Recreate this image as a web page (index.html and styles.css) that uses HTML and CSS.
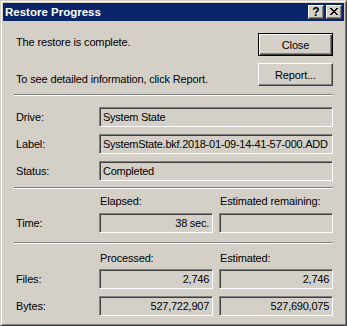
FILE: index.html
```html
<!DOCTYPE html>
<html>
<head>
<meta charset="utf-8">
<title>Restore Progress</title>
<link rel="stylesheet" href="styles.css">
</head>
<body>
<div class="window">
  <div class="titlebar">
    <span class="title">Restore Progress</span>
    <div class="caps">
      <div class="capbtn help">?</div>
      <div class="capbtn close">
        <svg width="8" height="7" viewBox="0 0 8 7" shape-rendering="crispEdges"><path fill="#000" d="M0 0h2v1h-2zM6 0h2v1h-2zM1 1h2v1h-2zM5 1h2v1h-2zM2 2h4v1h-4zM3 3h2v1h-2zM2 4h4v1h-4zM1 5h2v1h-2zM5 5h2v1h-2zM0 6h2v1h-2zM6 6h2v1h-2z"/></svg>
      </div>
    </div>
  </div>
  <div class="client">
    <div class="top">
      <div class="msgs">
        <p class="msg msg1">The restore is complete.</p>
        <p class="msg msg2">To see detailed information, click Report.</p>
      </div>
      <div class="btns">
        <button class="btn default">Close</button>
        <button class="btn">Report...</button>
      </div>
    </div>
    <div class="sep"></div>
    <div class="info">
      <span class="lbl">Drive:</span><div class="field">System State</div>
      <span class="lbl">Label:</span><div class="field">SystemState.bkf.2018-01-09-14-41-57-000.ADD</div>
      <span class="lbl">Status:</span><div class="field">Completed</div>
    </div>
    <div class="sep sep2"></div>
    <div class="stats time">
      <span></span><span class="hdr">Elapsed:</span><span class="hdr">Estimated remaining:</span>
      <span class="lbl">Time:</span><div class="field num">38 sec.</div><div class="field num"></div>
    </div>
    <div class="sep sep3"></div>
    <div class="stats files">
      <span></span><span class="hdr">Processed:</span><span class="hdr">Estimated:</span>
      <span class="lbl">Files:</span><div class="field num">2,746</div><div class="field num">2,746</div>
      <span class="lbl">Bytes:</span><div class="field num">527,722,907</div><div class="field num">527,690,075</div>
    </div>
  </div>
</div>
</body>
</html>
```
FILE: styles.css
```css
* { box-sizing: border-box; }
html, body { margin: 0; padding: 0; }
body {
  width: 347px;
  height: 326px;
  overflow: hidden;
  background: #d4d0c8;
  font-family: "Liberation Sans", Arial, sans-serif;
  font-size: 11px;
  letter-spacing: -0.15px;
  color: #000;
}
.window {
  width: 347px;
  height: 326px;
  background: #d4d0c8;
  border: 1px solid;
  border-color: #d4d0c8 #404040 #404040 #d4d0c8;
  box-shadow: inset 1px 1px #fff, inset -1px -1px #808080;
  padding: 2px;
  display: flex;
  flex-direction: column;
}
.titlebar {
  height: 18px;
  flex: none;
  background: #0a246a;
  display: flex;
  align-items: center;
  justify-content: space-between;
  padding: 0 2px;
  margin-bottom: 1px;
}
.title {
  color: #fff;
  font-weight: bold;
  font-size: 11.5px;
  letter-spacing: 0;
  line-height: 13px;
}
.caps { display: flex; gap: 2px; }
.capbtn {
  width: 16px;
  height: 14px;
  background: #d4d0c8;
  border: 1px solid;
  border-color: #fff #404040 #404040 #fff;
  box-shadow: inset -1px -1px #808080;
  display: flex;
  align-items: center;
  justify-content: center;
}
.help {
  font-weight: bold;
  font-size: 12px;
  letter-spacing: 0;
  line-height: 12px;
  padding-bottom: 1px;
}
.close svg { display: block; margin-bottom: 1px; }
.client {
  flex: 1;
  padding: 0 11px;
}
.top {
  height: 72px;
  display: flex;
  justify-content: space-between;
}
.msgs { padding-left: 2px; }
.msg { margin: 0; line-height: 13px; white-space: nowrap; }
.msg1 { margin-top: 14px; }
.msg2 { margin-top: 24px; }
.btns {
  padding-top: 11px;
  display: flex;
  flex-direction: column;
  gap: 7px;
}
.btn {
  width: 75px;
  height: 23px;
  padding: 0;
  margin: 0;
  font: inherit;
  letter-spacing: inherit;
  color: #000;
  background: #d4d0c8;
  border: 1px solid;
  border-color: #fff #404040 #404040 #fff;
  box-shadow: inset -1px -1px #808080;
  border-radius: 0;
  line-height: 20px;
}
.btn.default {
  border-color: #000;
  box-shadow: inset 1px 1px #fff, inset -1px -1px #404040, inset -2px -2px #808080;
}
.sep {
  height: 2px;
  border-top: 1px solid #808080;
  border-bottom: 1px solid #fff;
}
.sep2 { margin-top: 6px; }
.sep3 { margin-top: 9px; }
.info {
  padding-top: 11px;
  display: grid;
  grid-template-columns: 85px 234px;
  grid-auto-rows: 20px;
  row-gap: 7px;
}
.lbl {
  padding-left: 2px;
  line-height: 20px;
  white-space: nowrap;
}
.field {
  height: 20px;
  border: 1px solid;
  border-color: #808080 #fff #fff #808080;
  box-shadow: inset 1px 1px #404040;
  padding: 0 2px 0 3px;
  line-height: 18px;
  letter-spacing: -0.25px;
  white-space: nowrap;
  overflow: hidden;
}
.num { text-align: right; padding-right: 3px; }
.stats {
  display: grid;
  grid-template-columns: 79px 114px 114px;
  column-gap: 6px;
  align-items: start;
}
.hdr {
  padding-left: 1px;
  line-height: 13px;
  white-space: nowrap;
}
.time {
  padding-top: 6px;
  grid-template-rows: 18px 20px;
}
.files {
  padding-top: 8px;
  grid-template-rows: 17px 27px 20px;
}
```
